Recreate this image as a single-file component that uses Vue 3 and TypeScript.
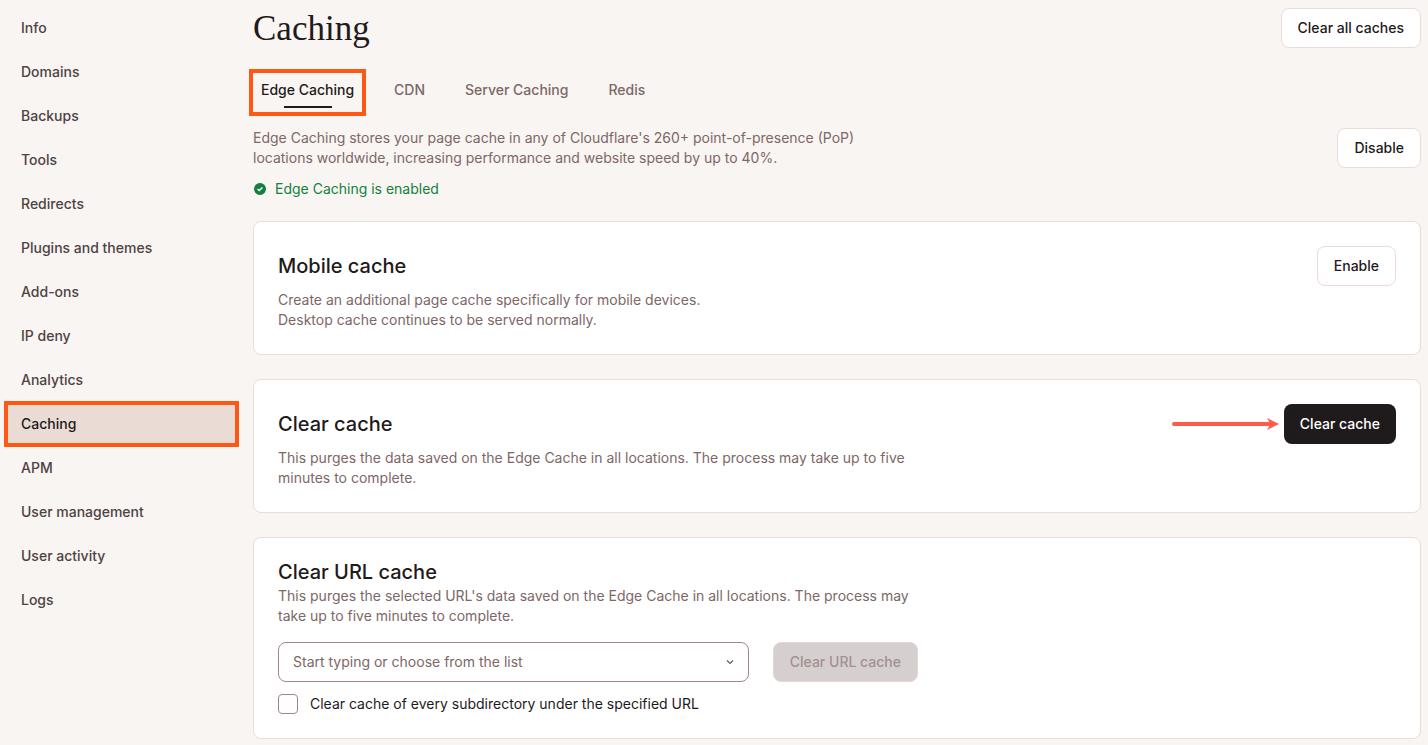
<script setup lang="ts">
import { ref } from 'vue'

const navItems: string[] = [
  'Info',
  'Domains',
  'Backups',
  'Tools',
  'Redirects',
  'Plugins and themes',
  'Add-ons',
  'IP deny',
  'Analytics',
  'Caching',
  'APM',
  'User management',
  'User activity',
  'Logs',
]
const tabs: string[] = ['Edge Caching', 'CDN', 'Server Caching', 'Redis']

const activeNav = ref('Caching')
const activeTab = ref('Edge Caching')
const url = ref('')
const includeSubdirectories = ref(false)
</script>

<template>
  <div class="layout">
    <nav class="sidebar" aria-label="Site">
      <a
        v-for="item in navItems"
        :key="item"
        href="#"
        class="nav-item"
        :class="{ active: item === activeNav }"
        @click.prevent="activeNav = item"
      >{{ item }}</a>
    </nav>

    <main class="main">
      <header class="row">
        <h1>Caching</h1>
        <button type="button" class="btn">Clear all caches</button>
      </header>

      <div class="tabs" role="tablist">
        <button
          v-for="tab in tabs"
          :key="tab"
          type="button"
          role="tab"
          class="tab"
          :class="{ active: tab === activeTab }"
          :aria-selected="tab === activeTab"
          @click="activeTab = tab"
        >{{ tab }}</button>
      </div>

      <section class="intro">
        <div class="row">
          <p class="text">
            Edge Caching stores your page cache in any of Cloudflare's 260+ point-of-presence (PoP)
            locations worldwide, increasing performance and website speed by up to 40%.
          </p>
          <button type="button" class="btn">Disable</button>
        </div>
        <p class="status">
          <svg class="status-icon" viewBox="0 0 12 12" aria-hidden="true">
            <path
              d="M6 0l1.8.3 1.7.9 1.3 1.3.9 1.7L12 6l-.3 1.8-.9 1.7-1.3 1.3-1.7.9L6 12l-1.8-.3-1.7-.9-1.3-1.3-.9-1.7L0 6l.3-1.8.9-1.7 1.3-1.3L4.200.3z"
              fill="#14803f"
            />
            <path d="M3.500 5.900l1.800 1.700 3.100-3.100" fill="none" stroke="#fff" stroke-width="1.400" />
          </svg>
          Edge Caching is enabled
        </p>
      </section>

      <section class="card">
        <div class="row">
          <h2>Mobile cache</h2>
          <button type="button" class="btn">Enable</button>
        </div>
        <p class="text">
          Create an additional page cache specifically for mobile devices.<br />
          Desktop cache continues to be served normally.
        </p>
      </section>

      <section class="card">
        <div class="row">
          <h2>Clear cache</h2>
          <div class="pointed">
            <svg class="arrow" viewBox="0 0 107 12" aria-hidden="true">
              <path d="M2 6h98" stroke="#ff5a4a" stroke-width="4" stroke-linecap="round" />
              <path d="M95 0l12 6-12 6 3.5-6z" fill="#ff5a4a" />
            </svg>
            <button type="button" class="btn primary">Clear cache</button>
          </div>
        </div>
        <p class="text">
          This purges the data saved on the Edge Cache in all locations. The process may take up to
          five minutes to complete.
        </p>
      </section>

      <section class="card">
        <h2>Clear URL cache</h2>
        <p class="text">
          This purges the selected URL's data saved on the Edge Cache in all locations. The process
          may take up to five minutes to complete.
        </p>
        <div class="url-row">
          <div class="combo">
            <input
              v-model="url"
              type="text"
              role="combobox"
              aria-label="URL"
              aria-expanded="false"
              placeholder="Start typing or choose from the list"
            />
            <svg class="chevron" viewBox="0 0 8 8" aria-hidden="true">
              <path d="M1 2.5l3 3 3-3" fill="none" stroke="#6b5656" stroke-width="1.2" />
            </svg>
          </div>
          <button type="button" class="btn" disabled>Clear URL cache</button>
        </div>
        <label class="check">
          <input v-model="includeSubdirectories" type="checkbox" />
          Clear cache of every subdirectory under the specified URL
        </label>
      </section>
    </main>
  </div>
</template>

<style>
body {
  background: #f9f5f2;
}
</style>

<style scoped>
.layout {
  display: flex;
  gap: 15px;
  padding: 6px 7px 6px 5px;
  color: #1f1a1b;
  font: 400 14px/20px Inter, "Liberation Sans", sans-serif;
}
h1,
h2,
p {
  margin: 0;
}
button,
input {
  font: inherit;
}
.sidebar {
  display: flex;
  flex: 0 0 233px;
  flex-direction: column;
}
.nav-item {
  padding: 12px 16px;
  color: #4e4242;
  font-weight: 500;
  text-decoration: none;
}
.nav-item.active {
  background: #eadcd5;
  color: #1f1a1b;
  outline: 4px solid #ff5714;
  outline-offset: -3px;
}
.main {
  flex: 1;
  min-width: 0;
  padding-top: 2px;
}
.row {
  display: flex;
  align-items: center;
  justify-content: space-between;
  gap: 24px;
}
h1 {
  padding-top: 2px;
  font: 400 35px/38px "Liberation Serif", serif;
}
h2 {
  font-size: 20px;
  font-weight: 500;
  line-height: 20px;
}
.btn {
  flex: none;
  height: 40px;
  padding: 0 16px;
  border: 1px solid #ecdcd6;
  border-radius: 8px;
  background: #fff;
  color: #1f1a1b;
  font-weight: 500;
}
.btn.primary {
  border: 0;
  background: #1f1a1b;
  color: #fff;
}
.btn:disabled {
  border-color: #e6d6d2;
  background: #d6cfcf;
  color: #a39090;
}
.tabs {
  display: flex;
  gap: 24px;
  margin: 25px 0 16px;
}
.tab {
  position: relative;
  padding: 7px 8px 12px;
  border: 0;
  background: none;
  color: #7d6767;
  font-weight: 500;
}
.tab.active {
  color: #1f1a1b;
  outline: 4px solid #ff5714;
}
.tab.active::after {
  position: absolute;
  bottom: 4px;
  left: 50%;
  width: 48px;
  height: 2px;
  margin-left: -24px;
  background: #1f1a1b;
  content: "";
}
.text {
  max-width: 640px;
  color: #7d6767;
}
.intro {
  margin-bottom: 22px;
}
.status {
  display: flex;
  align-items: center;
  gap: 9px;
  margin-top: 11px;
  padding-left: 1px;
  color: #14803f;
}
.status-icon {
  width: 12px;
  height: 12px;
}
.card {
  display: flex;
  flex-direction: column;
  gap: 4px;
  padding: 24px;
  border: 1px solid #ecdcd6;
  border-radius: 8px;
  background: #fff;
}
.card + .card {
  margin-top: 24px;
}
.pointed {
  display: flex;
  align-items: center;
  gap: 5px;
}
.arrow {
  width: 107px;
  height: 12px;
}
.url-row {
  display: flex;
  gap: 24px;
  max-width: 640px;
  margin-top: 12px;
}
.combo {
  display: flex;
  flex: 1;
  align-items: center;
  box-sizing: border-box;
  height: 40px;
  padding: 0 14px;
  border: 1px solid #9c8888;
  border-radius: 8px;
}
.combo input {
  flex: 1;
  min-width: 0;
  padding: 0;
  border: 0;
  outline: 0;
  background: none;
  color: #1f1a1b;
}
.combo input::placeholder {
  color: #7d6767;
  opacity: 1;
}
.chevron {
  width: 8px;
  height: 8px;
}
.check {
  display: flex;
  align-items: center;
  align-self: flex-start;
  gap: 12px;
  margin-top: 8px;
}
.check input {
  width: 20px;
  height: 20px;
  margin: 0;
  border: 1px solid #9c8888;
  border-radius: 4px;
  appearance: none;
  background: #fff;
}
.check input:checked {
  background: #1f1a1b;
}
</style>
